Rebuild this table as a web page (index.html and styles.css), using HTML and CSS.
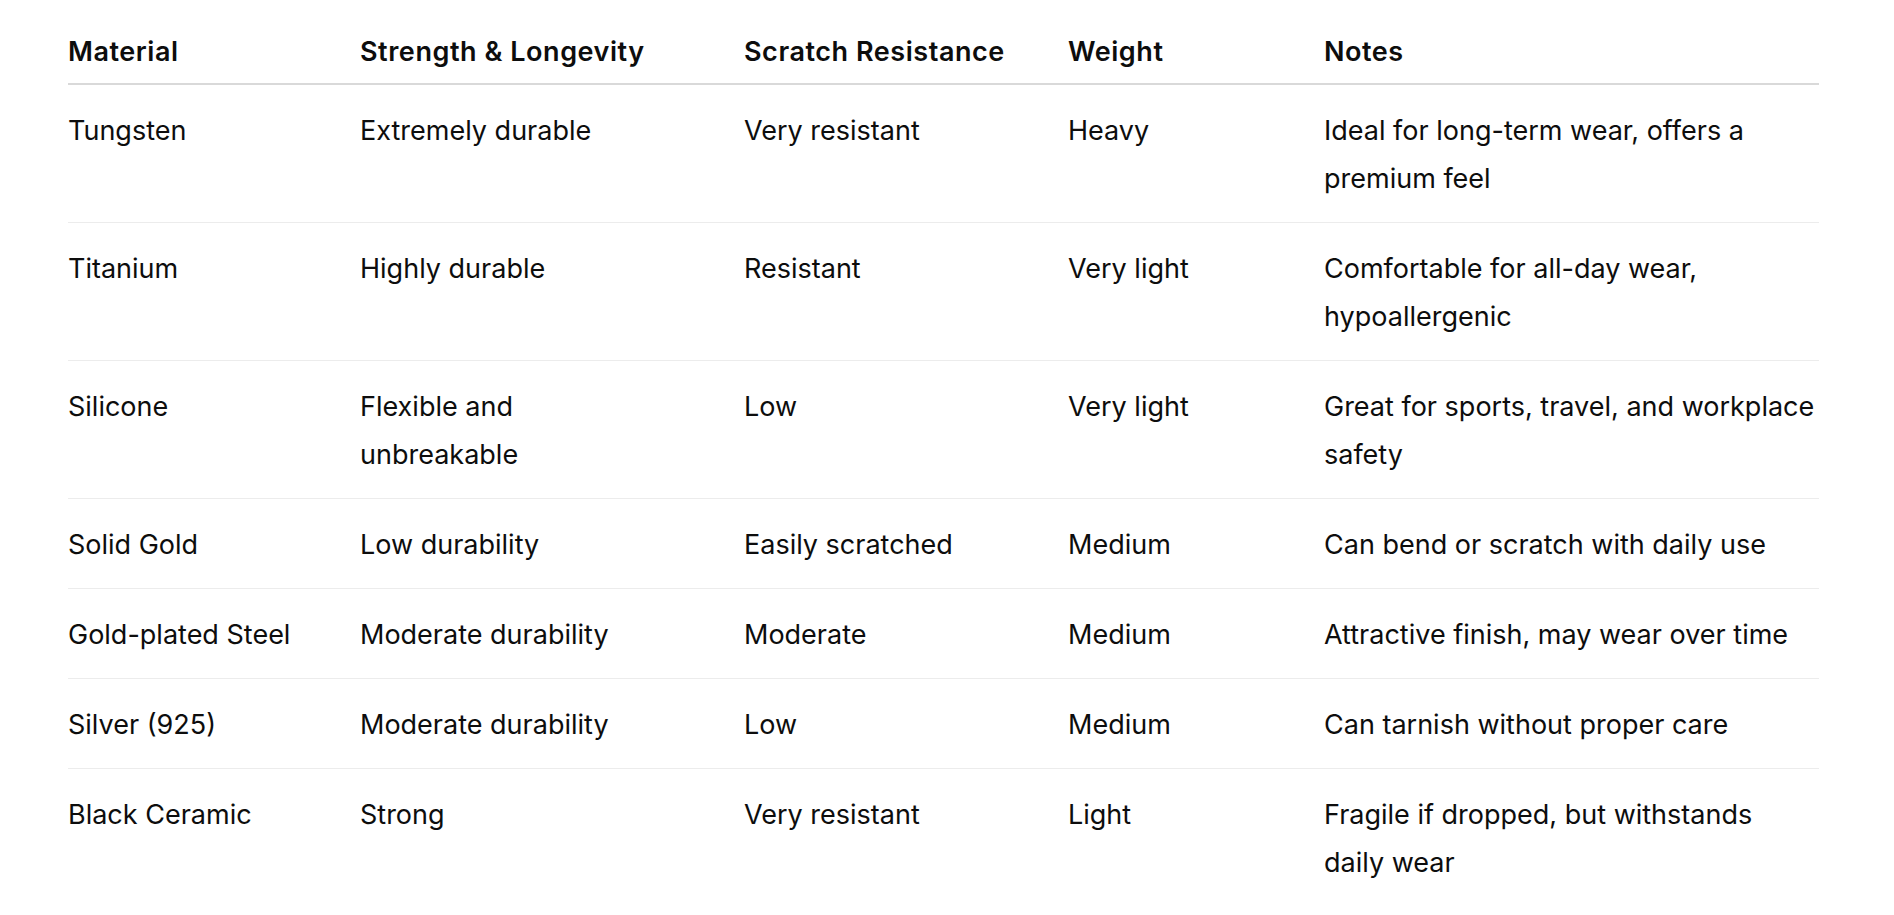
FILE: index.html
```html
<!DOCTYPE html>
<html lang="en">
<head>
<meta charset="utf-8">
<title>Ring materials comparison</title>
<link rel="stylesheet" href="styles.css">
</head>
<body>
<main class="page">
  <table class="materials">
    <thead>
      <tr>
        <th class="c1">Material</th>
        <th class="c2">Strength &amp; Longevity</th>
        <th class="c3">Scratch Resistance</th>
        <th class="c4">Weight</th>
        <th class="c5">Notes</th>
      </tr>
    </thead>
    <tbody>
      <tr><td>Tungsten</td><td>Extremely durable</td><td>Very resistant</td><td>Heavy</td><td>Ideal for long-term wear, offers a premium feel</td></tr>
      <tr><td>Titanium</td><td>Highly durable</td><td>Resistant</td><td>Very light</td><td>Comfortable for all-day wear, hypoallergenic</td></tr>
      <tr><td>Silicone</td><td>Flexible and unbreakable</td><td>Low</td><td>Very light</td><td>Great for sports, travel, and workplace safety</td></tr>
      <tr><td>Solid Gold</td><td>Low durability</td><td>Easily scratched</td><td>Medium</td><td>Can bend or scratch with daily use</td></tr>
      <tr><td>Gold-plated Steel</td><td>Moderate durability</td><td>Moderate</td><td>Medium</td><td>Attractive finish, may wear over time</td></tr>
      <tr><td>Silver (925)</td><td>Moderate durability</td><td>Low</td><td>Medium</td><td>Can tarnish without proper care</td></tr>
      <tr><td>Black Ceramic</td><td>Strong</td><td>Very resistant</td><td>Light</td><td>Fragile if dropped, but withstands daily wear</td></tr>
    </tbody>
  </table>
</main>
</body>
</html>
```
FILE: styles.css
```css
html, body {
  margin: 0;
  padding: 0;
  background: #ffffff;
}

body {
  font-family: Inter, "Noto Sans", "Liberation Sans", sans-serif;
  font-size: 27px;
  line-height: 48px;
  color: #0d0d0d;
}

.page {
  padding: 21px 0 0 68px;
}

.materials {
  width: 1751px;
  border-collapse: collapse;
  table-layout: fixed;
}

.materials th,
.materials td {
  box-sizing: border-box;
  text-align: left;
  vertical-align: top;
  padding-left: 0;
}

.materials th {
  font-weight: 600;
  letter-spacing: 0.55px;
  padding-top: 7px;
  padding-bottom: 7px;
  border-bottom: 2px solid #d9d9d9;
}

.materials td {
  font-weight: 400;
  padding-top: 21.5px;
  padding-bottom: 19.5px;
  border-bottom: 1px solid #ececec;
}

.materials tbody tr:last-child td {
  border-bottom: none;
}

.c1 { width: 292px; padding-right: 40px; }
.c2 { width: 384px; padding-right: 80px; }
.c3 { width: 324px; padding-right: 40px; }
.c4 { width: 256px; padding-right: 40px; }
.c5 { width: 495px; padding-right: 0; }

.materials td:nth-child(1) { padding-right: 40px; }
.materials td:nth-child(2) { padding-right: 80px; }
.materials td:nth-child(3) { padding-right: 40px; }
.materials td:nth-child(4) { padding-right: 40px; }
.materials td:nth-child(5) { padding-right: 0; }
```
